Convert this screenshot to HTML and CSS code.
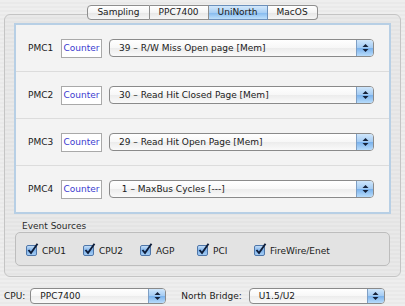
FILE: index.html
```
<!DOCTYPE html>
<html>
<head>
    <meta charset="UTF-8">
    <title>UniNorth counters</title>
    <link rel="stylesheet" href="styles.css">
</head>
<body>
    <div class="window">
        <div class="tabbar">
            <span class="tab">Sampling</span>
            <span class="tab">PPC7400</span>
            <span class="tab tab-active">UniNorth</span>
            <span class="tab">MacOS</span>
        </div>
        <div class="tabbox">
            <div class="pmc-panel">
                <div class="pmc-row">
                    <span class="pmc-label">PMC1</span>
                    <span class="counter">Counter</span>
                    <div class="popup">
                        <span class="popup-text">39 – R/W Miss Open page [Mem]</span>
                        <span class="popup-arrows"><svg width="7" height="10" viewBox="0 0 7 10"><polygon points="0.5,4 3.5,1 6.5,4"/><polygon points="0.5,6 3.5,9 6.5,6"/></svg></span>
                    </div>
                </div>
                <div class="pmc-row">
                    <span class="pmc-label">PMC2</span>
                    <span class="counter">Counter</span>
                    <div class="popup">
                        <span class="popup-text">30 – Read Hit Closed Page [Mem]</span>
                        <span class="popup-arrows"><svg width="7" height="10" viewBox="0 0 7 10"><polygon points="0.5,4 3.5,1 6.5,4"/><polygon points="0.5,6 3.5,9 6.5,6"/></svg></span>
                    </div>
                </div>
                <div class="pmc-row">
                    <span class="pmc-label">PMC3</span>
                    <span class="counter">Counter</span>
                    <div class="popup">
                        <span class="popup-text">29 – Read Hit Open Page [Mem]</span>
                        <span class="popup-arrows"><svg width="7" height="10" viewBox="0 0 7 10"><polygon points="0.5,4 3.5,1 6.5,4"/><polygon points="0.5,6 3.5,9 6.5,6"/></svg></span>
                    </div>
                </div>
                <div class="pmc-row">
                    <span class="pmc-label">PMC4</span>
                    <span class="counter">Counter</span>
                    <div class="popup">
                        <span class="popup-text">&nbsp;1 – MaxBus Cycles [---]</span>
                        <span class="popup-arrows"><svg width="7" height="10" viewBox="0 0 7 10"><polygon points="0.5,4 3.5,1 6.5,4"/><polygon points="0.5,6 3.5,9 6.5,6"/></svg></span>
                    </div>
                </div>
            </div>
            <div class="group-title">Event Sources</div>
            <div class="group">
                <span class="source"><svg class="check" width="13" height="13" viewBox="0 0 13 13"><defs><linearGradient id="cb" x1="0" y1="0" x2="0" y2="1"><stop offset="0" stop-color="#c9e1f8"/><stop offset="0.5" stop-color="#7fb2ea"/><stop offset="1" stop-color="#a9d0f6"/></linearGradient></defs><rect x="0.5" y="2.5" width="10" height="10" rx="1.5" fill="url(#cb)" stroke="#4f76a8"/><path d="M2.5 7 L5 10 L11.5 0.8" fill="none" stroke="#0e1d3a" stroke-width="1.9"/></svg>CPU1</span>
                <span class="source"><svg class="check" width="13" height="13" viewBox="0 0 13 13"><rect x="0.5" y="2.5" width="10" height="10" rx="1.5" fill="url(#cb)" stroke="#4f76a8"/><path d="M2.5 7 L5 10 L11.5 0.8" fill="none" stroke="#0e1d3a" stroke-width="1.9"/></svg>CPU2</span>
                <span class="source"><svg class="check" width="13" height="13" viewBox="0 0 13 13"><rect x="0.5" y="2.5" width="10" height="10" rx="1.5" fill="url(#cb)" stroke="#4f76a8"/><path d="M2.5 7 L5 10 L11.5 0.8" fill="none" stroke="#0e1d3a" stroke-width="1.9"/></svg>AGP</span>
                <span class="source"><svg class="check" width="13" height="13" viewBox="0 0 13 13"><rect x="0.5" y="2.5" width="10" height="10" rx="1.5" fill="url(#cb)" stroke="#4f76a8"/><path d="M2.5 7 L5 10 L11.5 0.8" fill="none" stroke="#0e1d3a" stroke-width="1.9"/></svg>PCI</span>
                <span class="source source-last"><svg class="check" width="13" height="13" viewBox="0 0 13 13"><rect x="0.5" y="2.5" width="10" height="10" rx="1.5" fill="url(#cb)" stroke="#4f76a8"/><path d="M2.5 7 L5 10 L11.5 0.8" fill="none" stroke="#0e1d3a" stroke-width="1.9"/></svg>FireWire/Enet</span>
            </div>
        </div>
        <div class="footer">
            <span class="footer-label">CPU:</span>
            <div class="popup popup-small">
                <span class="popup-text">PPC7400</span>
                <span class="popup-arrows"><svg width="7" height="10" viewBox="0 0 7 10"><polygon points="0.5,4 3.5,1 6.5,4"/><polygon points="0.5,6 3.5,9 6.5,6"/></svg></span>
            </div>
            <span class="footer-label footer-label-nb">North Bridge:</span>
            <div class="popup popup-small">
                <span class="popup-text">U1.5/U2</span>
                <span class="popup-arrows"><svg width="7" height="10" viewBox="0 0 7 10"><polygon points="0.5,4 3.5,1 6.5,4"/><polygon points="0.5,6 3.5,9 6.5,6"/></svg></span>
            </div>
        </div>
    </div>
</body>
</html>
```

FILE: styles.css
```
html, body {
    margin: 0;
    padding: 0;
}
body {
    width: 405px;
    height: 306px;
    overflow: hidden;
    font-family: "DejaVu Sans", sans-serif;
    font-size: 9px;
    color: #1a1a1a;
    background: repeating-linear-gradient(#eeeeee 0 2px, #e9e9e9 2px 4px);
}
.window {
    padding: 5px 4px 0;
}
.tabbar {
    display: flex;
    justify-content: center;
    position: relative;
    z-index: 1;
    margin-bottom: -6px;
}
.tab {
    height: 13px;
    line-height: 13px;
    padding: 0 9px;
    border: 1px solid #8e8e8e;
    border-left: none;
    background: linear-gradient(#ffffff, #f4f4f4 50%, #e6e6e6 51%, #f6f6f6);
}
.tab:first-child {
    border-left: 1px solid #8e8e8e;
    border-radius: 4px 0 0 4px;
}
.tab:last-child {
    border-radius: 0 4px 4px 0;
}
.tab-active {
    background: linear-gradient(#d3e8fb, #a9cff4 50%, #82b8ee 51%, #bfe0fb);
    border-color: #6b8fba;
}
.tabbox {
    border: 1px solid #c4c4c4;
    border-radius: 6px;
    padding: 8px 9px 10px;
    background: repeating-linear-gradient(#e9e9e9 0 2px, #e4e4e4 2px 4px);
}
.pmc-panel {
    border: 2px solid #b7cfe5;
    background: #f3f3f3;
}
.pmc-row {
    display: flex;
    align-items: center;
    height: 46px;
    padding: 0 15px 0 12px;
    border-bottom: 1px solid #dcdcdc;
}
.pmc-row:last-child {
    border-bottom: none;
}
.pmc-label {
    width: 33px;
}
.counter {
    box-sizing: border-box;
    width: 41px;
    height: 19px;
    line-height: 17px;
    text-align: center;
    border: 1px solid #a9a9a9;
    background: #ffffff;
    color: #3b3bd0;
    margin-right: 7px;
}
.popup {
    flex: 1;
    display: flex;
    align-items: stretch;
    box-sizing: border-box;
    height: 18px;
    border: 1px solid #8a8a8a;
    border-radius: 4px;
    background: linear-gradient(#ffffff, #f7f7f7 50%, #ececec 51%, #fafafa);
    overflow: hidden;
}
.popup-text {
    flex: 1;
    padding-left: 9px;
    line-height: 16px;
    white-space: pre;
}
.popup-arrows {
    width: 16px;
    display: flex;
    align-items: center;
    justify-content: center;
    background: linear-gradient(#cfe6fb, #a3cbf3 50%, #79b1ec 51%, #b8dcfb);
    border-left: 1px solid #7f9fc4;
}
.popup-arrows svg {
    fill: #15223a;
}
.group-title {
    height: 12px;
    line-height: 12px;
    margin: 6px 0 0 8px;
    color: #2a2a2a;
}
.group {
    display: flex;
    align-items: center;
    box-sizing: border-box;
    height: 34px;
    padding: 3px 0 0 10px;
    margin: 0 1px;
    border: 1px solid #bdbdbd;
    border-radius: 5px;
    background: #e3e3e3;
}
.source {
    display: flex;
    align-items: center;
    flex: none;
    width: 57px;
    white-space: nowrap;
}
.source-last {
    width: auto;
}
.check {
    flex: none;
    margin: -3px 3px 0 0;
}
.footer {
    display: flex;
    align-items: center;
    height: 17px;
    margin-top: 10px;
}
.footer-label {
    margin-right: 5px;
}
.footer-label-nb {
    margin-left: 15px;
    margin-right: 7px;
}
.popup-small {
    flex: none;
    width: 136px;
    height: 16px;
}
.popup-small .popup-text {
    line-height: 14px;
}
```
